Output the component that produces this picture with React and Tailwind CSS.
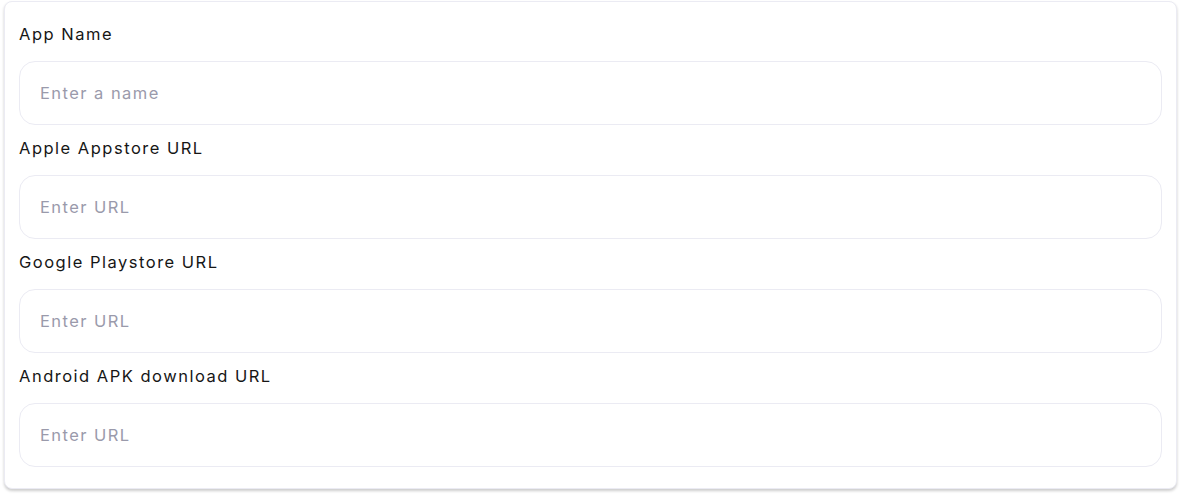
export default function App() {
  const fields = [
    { label: "App Name", placeholder: "Enter a name" },
    { label: "Apple Appstore URL", placeholder: "Enter URL" },
    { label: "Google Playstore URL", placeholder: "Enter URL" },
    { label: "Android APK download URL", placeholder: "Enter URL" },
  ];
  return (
    <div className="w-[1181px] h-[496px] bg-white pt-px px-[4px]" style={{ fontFamily: "Inter, 'Liberation Sans', sans-serif" }}>
      <div className="w-[1173px] h-[488px] rounded-[8px] border border-[#ebebf3] bg-white shadow-[0_2px_3px_rgba(0,0,0,0.2)] px-[14px] pt-[20px]">
        {fields.map((f, i) => (
          <div key={i} className="flex flex-col">
            <div className="h-[39px] text-[16.5px] tracking-[1.5px] text-[#161616] leading-[24px]">{f.label}</div>
            <div className="h-[64px] rounded-[16px] border border-[#ebebf3] flex items-center pl-[20px] text-[16.5px] tracking-[1.45px] text-[#9a9aab]">
              {f.placeholder}
            </div>
            <div className="h-[11px]" />
          </div>
        ))}
      </div>
    </div>
  );
}
